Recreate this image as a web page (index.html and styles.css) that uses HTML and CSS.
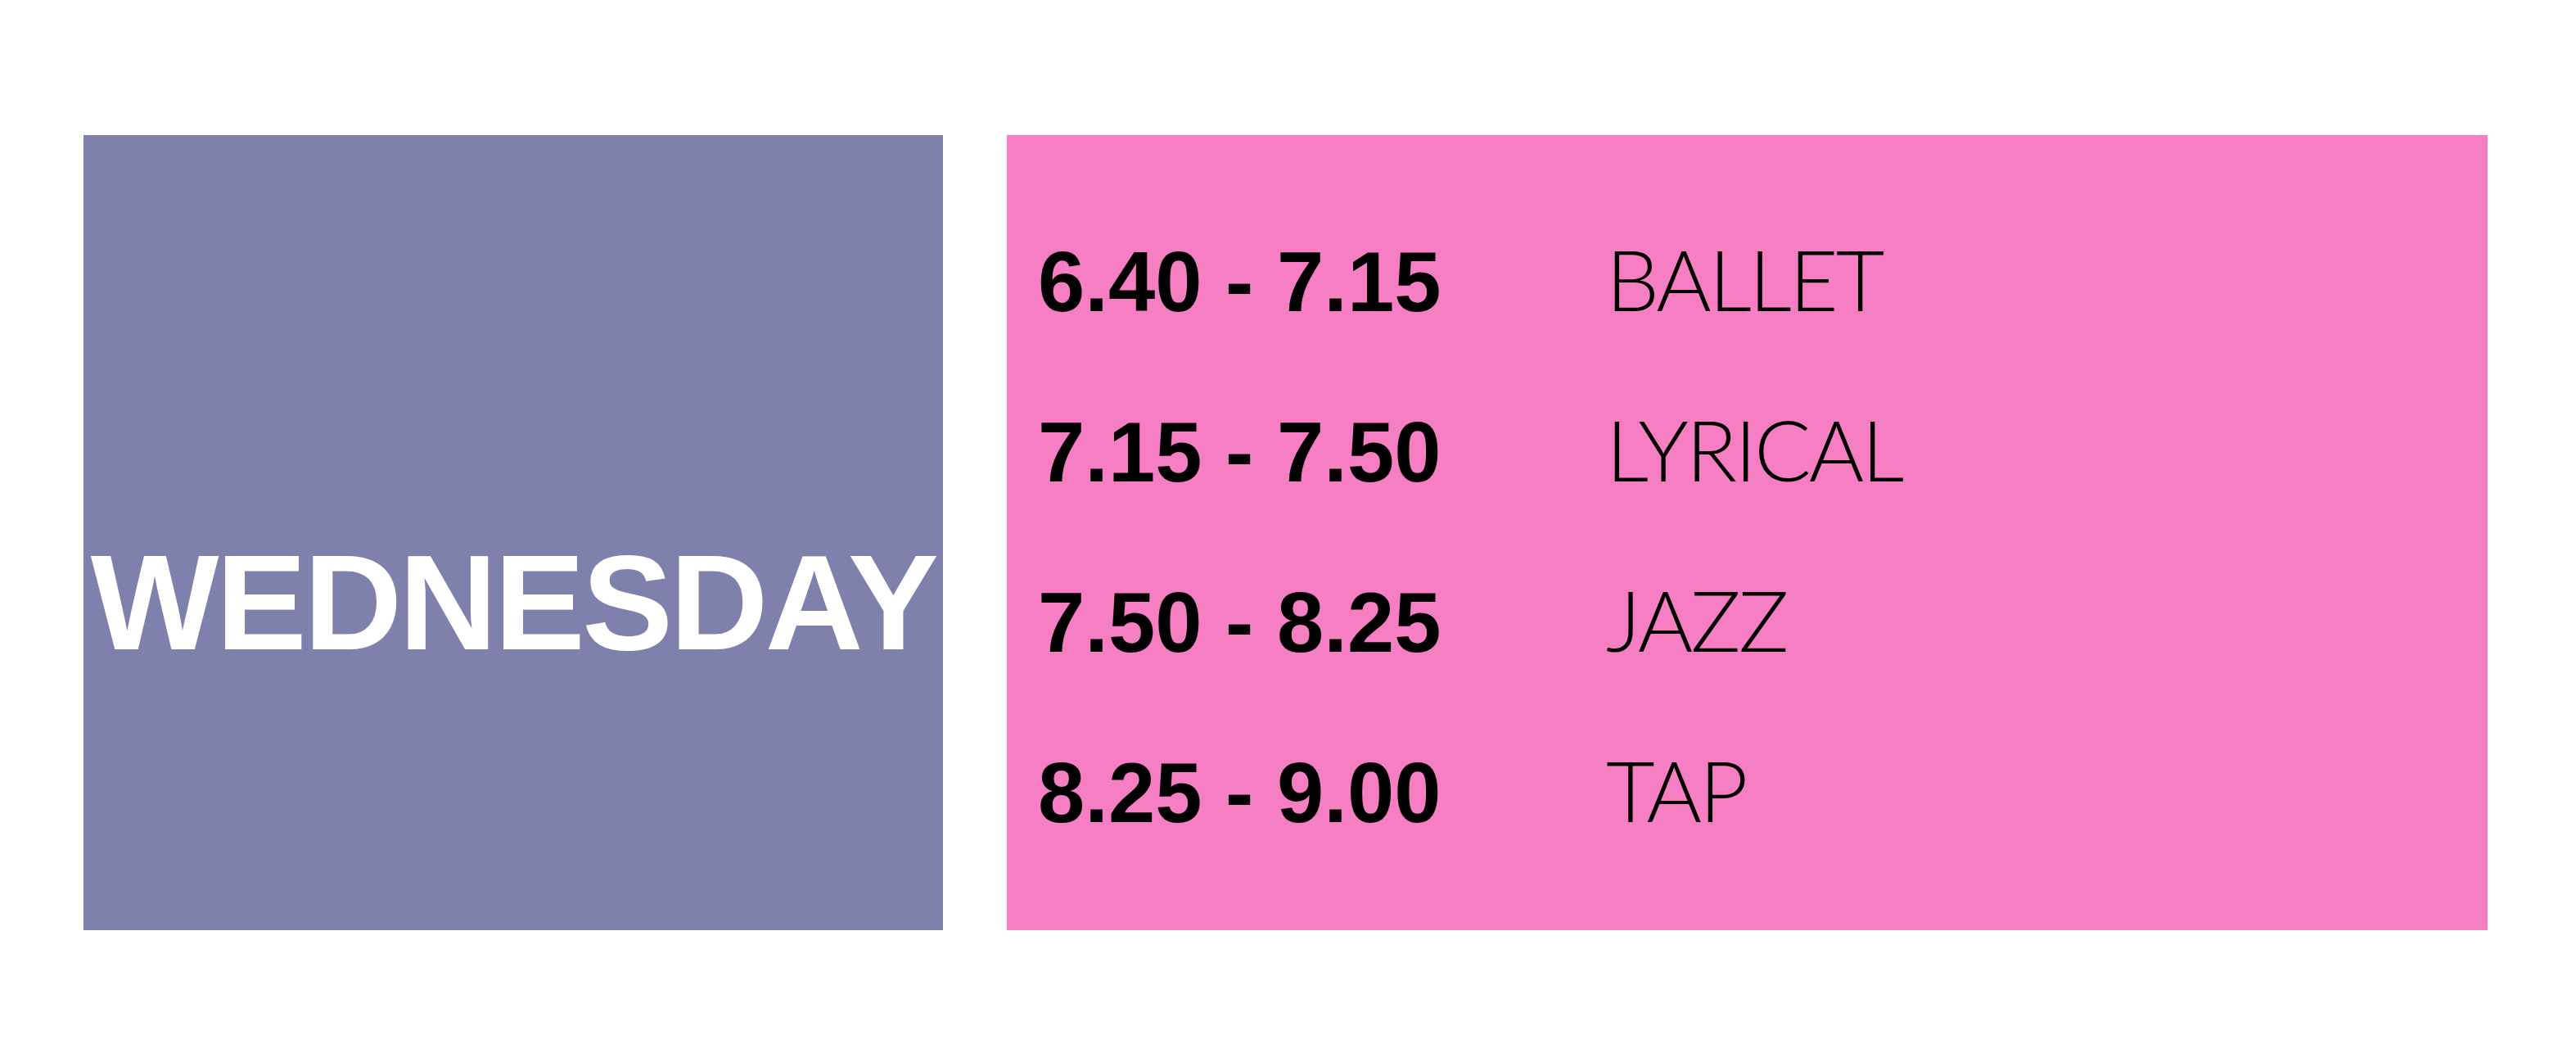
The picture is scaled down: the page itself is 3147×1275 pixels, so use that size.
FILE: index.html
```html
<!DOCTYPE html>
<html>
<head>
<meta charset="utf-8">
<link rel="stylesheet" href="styles.css">
</head>
<body>
<div class="schedule">
  <div class="day-card">
    <div class="day-name">WEDNESDAY</div>
  </div>
  <div class="class-card">
    <div class="row"><span class="time">6.40 - 7.15</span><span class="name">BALLET</span></div>
    <div class="row"><span class="time">7.15 - 7.50</span><span class="name">LYRICAL</span></div>
    <div class="row"><span class="time">7.50 - 8.25</span><span class="name">JAZZ</span></div>
    <div class="row"><span class="time">8.25 - 9.00</span><span class="name">TAP</span></div>
  </div>
</div>
</body>
</html>
```

FILE: styles.css
```css
html, body {
  margin: 0;
  padding: 0;
  background: #ffffff;
}
.schedule {
  display: flex;
  gap: 78px;
  padding: 165px 0 0 102px;
}
.day-card {
  width: 1050px;
  height: 971px;
  background: #7f80ac;
  overflow: hidden;
  padding-top: 488px;
  box-sizing: border-box;
}
.day-name {
  font-family: "Liberation Sans", Arial, sans-serif;
  font-weight: 700;
  font-size: 166px;
  line-height: 1;
  letter-spacing: -3.5px;
  color: #ffffff;
  text-align: center;
  white-space: nowrap;
}
.class-card {
  width: 1809px;
  height: 971px;
  background: #f57fc2;
  box-sizing: border-box;
  padding: 71px 0 0 38px;
}
.row {
  display: flex;
  align-items: baseline;
  line-height: 208px;
  height: 208px;
  color: #000000;
}
.time {
  width: 694px;
  font-family: "Liberation Sans", Arial, sans-serif;
  font-weight: 700;
  font-size: 103px;
}
.name {
  font-family: "Lato", "Liberation Sans", sans-serif;
  font-weight: 300;
  font-size: 103px;
  letter-spacing: -3px;
}
```
